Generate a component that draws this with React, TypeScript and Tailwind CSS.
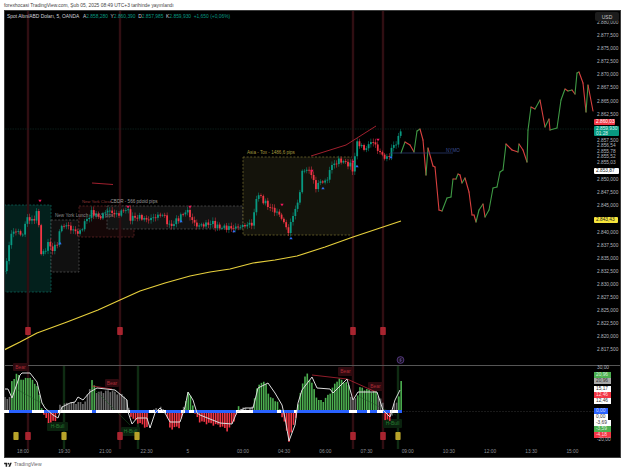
type Pt = [number, number];

const STEP = 2.29;

// close price in page pixels, read off the picture
const closes: Pt[] = [
  [4, 270], [7, 263], [10, 235], [17, 230], [22, 237], [27, 217], [33, 222], [38, 208], [40, 250], [43, 255],
  [48, 243], [52, 250], [58, 243], [60, 227], [67, 225], [72, 230], [80, 233], [83, 225], [92, 212], [100, 218],
  [107, 210], [117, 215], [127, 208], [130, 218], [140, 217], [147, 220], [163, 214], [170, 227], [187, 210],
  [192, 220], [197, 226], [213, 223], [217, 227], [233, 228], [243, 226], [253, 223], [257, 193], [267, 205],
  [280, 215], [289, 233], [292, 217], [298, 203], [303, 168], [312, 173], [315, 190], [318, 183], [328, 180],
  [330, 167], [340, 160], [350, 165], [353, 170], [357, 142], [365, 150], [372, 140], [380, 153], [387, 159],
  [392, 148], [398, 140], [401, 128],
];

const forecast: Pt[] = [
  [401, 153], [405, 142], [410, 145], [414, 152], [417, 131], [420, 129], [423, 140], [426, 175], [428, 148],
  [433, 166], [435, 167], [439, 210], [442, 211], [447, 198], [451, 197], [453, 179], [456, 179], [458, 174],
  [460, 175], [462, 183], [465, 178], [469, 192], [472, 215], [474, 215], [476, 222], [479, 210], [483, 204],
  [485, 217], [489, 210], [493, 188], [497, 187], [500, 172], [503, 170], [506, 144], [512, 150], [518, 152],
  [519, 144], [523, 150], [527, 162], [528, 130], [531, 107], [535, 109], [540, 100], [545, 127], [549, 119],
  [550, 130], [557, 128], [561, 100], [565, 89], [568, 91], [572, 90], [575, 94], [577, 73], [579, 72],
  [583, 83], [586, 112], [588, 85], [593, 111],
];

const maLine: Pt[] = [
  [4, 350], [20, 342], [37, 333], [67, 322], [98, 310], [120, 300], [140, 291], [165, 283], [190, 276], [210, 272],
  [230, 269], [253, 263], [275, 260], [297, 256], [325, 247], [353, 237], [380, 228], [401, 221],
];

const histLevels: Pt[] = [
  [4, 397], [10, 397], [12, 380], [17, 373], [23, 380], [28, 376], [35, 382], [38, 388], [42, 408], [44, 415],
  [50, 423], [57, 418], [59, 405], [70, 402], [85, 402], [92, 380], [95, 387], [97, 392], [110, 390], [125, 395],
  [129, 409], [132, 418], [140, 423], [147, 427], [149, 412], [160, 406], [166, 412], [170, 428], [180, 426],
  [183, 409], [188, 392], [192, 398], [194, 412], [200, 421], [210, 423], [220, 425], [228, 430], [236, 416],
  [238, 406], [245, 408], [252, 408], [256, 390], [262, 380], [266, 384], [270, 397], [277, 400], [280, 410],
  [284, 420], [289, 440], [295, 420], [298, 405], [303, 380], [307, 373], [312, 383], [318, 400], [324, 400],
  [330, 392], [338, 378], [348, 383], [352, 400], [356, 398], [360, 387], [370, 390], [377, 392], [383, 403],
  [385, 418], [390, 421], [393, 410], [395, 400], [398, 405], [400, 381], [401, 381],
];

const histColors: [number, number, string][] = [
  [4, 10, "#6a6a6a"], [10, 43, "#4caf50"], [43, 59, "#f23645"], [59, 91, "#6a6a6a"], [91, 96, "#4caf50"],
  [96, 130, "#6a6a6a"], [130, 149, "#f23645"], [149, 166, "#6a6a6a"], [166, 183, "#f23645"], [183, 185, "#6a6a6a"],
  [185, 193, "#4caf50"], [193, 237, "#f23645"], [237, 240, "#4caf50"], [240, 253, "#6a6a6a"], [253, 280, "#4caf50"],
  [280, 297, "#f23645"], [297, 350, "#4caf50"], [350, 356, "#6a6a6a"], [356, 378, "#4caf50"], [378, 384, "#6a6a6a"],
  [384, 392, "#f23645"], [392, 398, "#6a6a6a"], [398, 403, "#4caf50"],
];

const whiteLine: Pt[] = [
  [5, 389], [8, 389], [12, 398], [20, 375], [22, 373], [30, 373], [37, 382], [42, 403], [45, 408], [53, 415],
  [58, 418], [62, 407], [70, 403], [75, 402], [78, 397], [83, 400], [90, 392], [97, 388], [115, 390], [127, 400],
  [128, 412], [132, 424], [137, 418], [147, 418], [150, 428], [155, 413], [160, 408], [165, 413], [170, 422],
  [180, 422], [185, 407], [188, 392], [193, 400], [197, 413], [200, 415], [220, 423], [232, 424], [237, 412],
  [245, 408], [253, 408], [258, 388], [268, 383], [275, 393], [282, 405], [285, 418], [289, 441], [295, 425],
  [298, 403], [302, 390], [312, 377], [317, 388], [330, 389], [333, 393], [347, 379], [353, 400], [358, 392],
  [377, 392], [383, 410], [390, 417], [395, 400], [400, 390],
];

// zero line of the oscillator, [from, to]
const blueRuns: Pt[] = [
  [9, 32], [44, 58], [92, 96], [130, 149], [155, 158], [166, 181], [185, 189], [194, 236], [253, 277], [281, 294],
  [297, 349], [357, 367], [370, 377], [383, 390], [398, 402],
];

const tints = { up: "#089981", down: "#f23645" };

const pinkMarks: Pt[] = [[40, 201], [128, 207], [190, 207], [282, 205], [312, 171], [353, 162], [378, 140]];
const blueMarks: Pt[] = [[60, 243], [181, 221], [234, 231], [291, 238], [323, 188], [357, 166], [391, 157]];

const redBands = [28, 120, 353, 383];
const greenBands = [64, 138, 398];

const topTicks = ["2.880,000", "2.877,500", "2.875,000", "2.872,500", "2.870,000", "2.867,500", "2.865,000", "2.862,500"];
const lastTicks = ["2.857,500", "2.856,54", "2.855,78", "2.855,52", "2.855,03"];
const midTicks = ["2.850,000", "2.847,500", "2.845,000"];
const lowTicks = [
  "2.840,000", "2.837,500", "2.835,000", "2.832,500", "2.830,000", "2.827,500", "2.825,000", "2.822,500", "2.820,000", "2.817,500",
];

const timeLabels = ["18:00", "19:30", "21:00", "22:30", "5", "03:00", "04:30", "06:00", "07:30", "09:00", "10:30", "12:00", "13:30", "15:00"];

function lerp(pts: Pt[], x: number) {
  for (let i = 1; i < pts.length; i++) {
    if (x <= pts[i][0]) {
      const [x0, y0] = pts[i - 1];
      const [x1, y1] = pts[i];
      return y0 + ((y1 - y0) * (x - x0)) / (x1 - x0 || 1);
    }
  }
  return pts[pts.length - 1][1];
}

const toLine = (pts: Pt[]) => pts.map((p) => p.join(",")).join(" ");

function Candles() {
  const bars = [];
  let prev = 272;
  for (let x = 4.5; x < 401.5; x += STEP) {
    const wobble = Math.sin(x * 1.7) * 1.8 + Math.sin(x * 4.3) * 1.1;
    const close = lerp(closes, x) + wobble;
    const up = close < prev;
    const color = up ? tints.up : tints.down;
    const top = Math.min(prev, close);
    const h = Math.max(Math.abs(close - prev), 0.8);
    const wick = 1.2 + Math.abs(Math.sin(x * 2.9)) * 2.4;
    bars.push(
      <g key={x} fill={color}>
        <rect x={x - 0.25} y={top - wick} width={0.5} height={h + wick * 2} />
        <rect x={x - 0.9} y={top} width={1.8} height={h} />
      </g>,
    );
    prev = close;
  }
  return <g>{bars}</g>;
}

function Forecast() {
  return (
    <g fill="none" strokeWidth={1.1} strokeLinecap="round">
      {forecast.slice(1).map((p, i) => {
        const from = forecast[i];
        return (
          <line
            key={p[0]}
            x1={from[0]}
            y1={from[1]}
            x2={p[0]}
            y2={p[1]}
            stroke={p[1] < from[1] ? "#3f9a45" : "#d8403f"}
          />
        );
      })}
    </g>
  );
}

function Histogram() {
  const bars = [];
  for (let x = 5; x < 402; x += STEP) {
    const range = histColors.find(([a, b]) => x >= a && x < b);
    const level = lerp(histLevels, x) + (Math.round(x / STEP) % 3 === 0 ? 2 : 0);
    const top = Math.min(level, 410);
    const bottom = Math.max(level, 412);
    bars.push(<rect key={x} x={x - 0.8} y={top} width={1.6} height={bottom - top} fill={range ? range[2] : "#6a6a6a"} />);
  }
  return <g>{bars}</g>;
}

function Tag({ x, y, w, h, text, kind }: { x: number; y: number; w: number; h: number; text: string; kind: "bear" | "bull" }) {
  return (
    <g>
      <rect x={x} y={y} width={w} height={h} rx={1} fill={kind === "bear" ? "#2e0a0f" : "#0a220e"} />
      <text
        x={x + w / 2}
        y={y + h / 2 + 1.7}
        textAnchor="middle"
        fontSize={5}
        fill={kind === "bear" ? "#a82a35" : "#277a31"}
      >
        {text}
      </text>
    </g>
  );
}

function PricePane() {
  return (
    <div className="flex h-[354px]">
      <svg viewBox="5 11 590 354" className="h-[354px] w-[590px] shrink-0">
        {/* session boxes */}
        <g strokeWidth={0.7} strokeDasharray="2 1.6">
          <rect x={4} y={205} width={47} height={87} fill="#03201c" stroke="#0f6f62" />
          <rect x={51} y={220} width={28} height={52} fill="#101010" stroke="#5a5a5a" />
          <rect x={79} y={206} width={55} height={31} fill="#140707" stroke="#6e2a2a" />
          <rect x={107} y={206} width={136} height={23} fill="#131313" stroke="#5a5a5a" />
          <rect x={243} y={157} width={110} height={78} fill="#14130b" stroke="#7d7431" />
        </g>
        {redBands.map((x) => (
          <rect key={x} x={x - 1.2} y={11} width={2.4} height={354} fill="#300e12" />
        ))}
        <line x1={5} y1={129} x2={595} y2={129} stroke="#10302a" strokeWidth={0.6} strokeDasharray="1.5 1" />
        <text x={55} y={217} fontSize={4.6} fill="#8a8a8a">New York Lunch - 768,5 pips</text>
        <text x={82} y={203} fontSize={4.2} fill="#8f3535">New York Close</text>
        <text x={110.5} y={203} fontSize={4.6} fill="#9a9a9a">CBDR - 566 pdoid pips</text>
        <text x={247} y={153.5} fontSize={4.6} fill="#a3993f">Asia - Tox - 1486,6 pips</text>

        <polyline points={toLine(maLine)} fill="none" stroke="#e6cf3c" strokeWidth={1.2} strokeLinejoin="round" />
        <Candles />
        <Forecast />

        <line x1={92} y1={183} x2={113} y2={184.5} stroke="#c9283a" strokeWidth={0.8} />
        <polyline points="311,156 346,145 376,126" fill="none" stroke="#c9283a" strokeWidth={0.8} />
        <line x1={390} y1={153} x2={453} y2={153} stroke="#2f3f78" strokeWidth={0.7} />
        <text x={446} y={152} fontSize={4.6} fill="#3d4f96">NYMO</text>

        {pinkMarks.map(([x, y]) => (
          <polygon key={x} points={`${x - 1.7},${y - 1.3} ${x + 1.7},${y - 1.3} ${x},${y + 1.3}`} fill="#f0185c" />
        ))}
        {blueMarks.map(([x, y]) => (
          <polygon key={x} points={`${x - 1.7},${y + 1.3} ${x + 1.7},${y + 1.3} ${x},${y - 1.3}`} fill="#2f6df0" />
        ))}
        {redBands.map((x) => (
          <rect key={x} x={x - 2.8} y={327} width={5.6} height={8} rx={0.8} fill="#a8242f" />
        ))}

        {/* badge above the last bar */}
        <circle cx={400.5} cy={360} r={3.4} fill="#15101c" stroke="#6f47a8" strokeWidth={0.7} />
        <path d="M401.2 358 L399.7 360.2 H401.3 L399.9 362" fill="none" stroke="#8e63cc" strokeWidth={0.5} />
      </svg>

      <div className="relative flex w-[25px] flex-col pl-[2px] pt-[9px] text-[4.8px] leading-[6px] text-[#b2b5be]">
        <div className="flex flex-col gap-[7.1px]">
          {topTicks.map((t) => (
            <span key={t} className="h-[6px]">{t}</span>
          ))}
        </div>
        <span className="-ml-[3px] mt-[1.8px] h-[6px] w-[21px] rounded-[1px] bg-[#f23645] pl-[2px] text-white">2.860,03</span>
        <span className="-ml-[3px] mt-[0.5px] h-[10px] w-[25px] rounded-[1px] bg-[#089981] pl-[2px] leading-[5px] text-[#d6f5ef]">
          2.859,930
          <br />
          01:28
        </span>
        <div className="mt-[2px] flex flex-col">
          {lastTicks.map((t) => (
            <span key={t} className="-mb-[0.5px] h-[6px]">{t}</span>
          ))}
        </div>
        <span className="-ml-[3px] mt-[2.5px] h-[6px] w-[25px] rounded-[1px] bg-white pl-[2px] text-[#222]">2.853,87</span>
        <div className="mt-[3px] flex flex-col gap-[7.1px]">
          {midTicks.map((t) => (
            <span key={t} className="h-[6px]">{t}</span>
          ))}
        </div>
        <span className="-ml-[3px] mt-[8.3px] h-[6px] w-[24px] rounded-[1px] bg-[#f7e53b] pl-[2px] text-[#222]">2.843,43</span>
        <div className="mt-[6.2px] flex flex-col gap-[7.1px]">
          {lowTicks.map((t) => (
            <span key={t} className="h-[6px]">{t}</span>
          ))}
        </div>
        {/* currency button floats over the axis */}
        <div className="absolute left-0 top-[1px] flex h-[9px] w-[24px] items-center justify-center rounded-[2px] bg-[#1c1c1c] text-[5px] text-[#c8c8c8]">
          USD
        </div>
      </div>
    </div>
  );
}

function OscillatorPane() {
  return (
    <div className="flex h-[83px] border-t border-[#555]">
      <svg viewBox="5 366 590 83" className="h-[83px] w-[590px] shrink-0 overflow-visible">
        {redBands.map((x) => (
          <rect key={x} x={x - 1.2} y={366} width={2.4} height={83} fill="#300e12" />
        ))}
        {greenBands.map((x) => (
          <rect key={x} x={x - 1.2} y={366} width={2.4} height={83} fill="#0f2c13" />
        ))}
        <line x1={403} y1={411.5} x2={595} y2={411.5} stroke="#2a2a2a" strokeWidth={0.6} strokeDasharray="2 1" />

        <Tag x={13} y={363} w={15} h={8} text="Bear" kind="bear" />
        <Tag x={105} y={379} w={14} h={8} text="Bear" kind="bear" />
        <Tag x={338} y={367} w={15} h={9} text="Bear" kind="bear" />
        <Tag x={368} y={382} w={15} h={9} text="Bear" kind="bear" />
        <Tag x={47} y={422} w={21} h={9} text="H-Bull" kind="bull" />
        <Tag x={121} y={427} w={19} h={9} text="H-Bull" kind="bull" />
        <Tag x={383} y={419} w={19} h={9} text="H-Bull" kind="bull" />

        <Histogram />

        {/* divergence lines */}
        <line x1={18} y1={390} x2={45} y2={405} stroke="#1d5a23" strokeWidth={0.5} />
        <line x1={95} y1={390} x2={130} y2={425} stroke="#1d5a23" strokeWidth={0.5} />
        <line x1={356} y1={395} x2={396} y2={415} stroke="#1d5a23" strokeWidth={0.5} />
        <line x1={92} y1={386} x2={112} y2={389} stroke="#d02a3c" strokeWidth={0.7} />
        <polyline points="312,375 347,379 376,392" fill="none" stroke="#d02a3c" strokeWidth={0.7} />

        <rect x={4} y={410} width={398} height={3} fill="#ffffff" />
        {blueRuns.map(([a, b]) => (
          <rect key={a} x={a} y={410} width={b - a} height={3} fill="#2962ff" />
        ))}
        <polyline points={toLine(whiteLine)} fill="none" stroke="#dcdcdc" strokeWidth={1} strokeLinejoin="round" />

        {[16, 64, 137, 398].map((x) => (
          <rect key={x} x={x - 2.6} y={432} width={5.2} height={8} rx={0.8} fill="#b8a32a" />
        ))}
        {redBands.map((x) => (
          <rect key={x} x={x - 2.8} y={432} width={5.6} height={8} rx={0.8} fill="#a8242f" />
        ))}
      </svg>

      <div className="flex w-[25px] flex-col pl-[2px] text-[4.8px] leading-[6px] text-[#b2b5be]">
        <span className="-mt-[1px] h-[6px]">30,00</span>
        <span className="-ml-[3px] mt-[1px] h-[6px] w-[17px] bg-[#4caf50] pl-[2px] text-[#d7f0d9]">20,96</span>
        <span className="-ml-[3px] h-[6px] w-[17px] bg-[#a8a8a8] pl-[2px] text-[#333]">20,96</span>
        <span className="-ml-[3px] mt-[2px] h-[6px] w-[17px] bg-white pl-[2px] text-[#333]">15,17</span>
        <span className="-ml-[3px] h-[6px] w-[17px] bg-[#f23645] pl-[2px] text-[#ffd9dd]">12,46</span>
        <span className="-ml-[3px] h-[6px] w-[17px] bg-white pl-[2px] text-[#333]">12,46</span>
        <span className="-ml-[3px] mt-[4px] h-[6px] w-[14px] bg-[#2962ff] pl-[2px] text-[#cfdcff]">0,00</span>
        <span className="-ml-[3px] h-[6px] w-[14px] bg-white pl-[2px] text-[#333]">0,00</span>
        <span className="-ml-[3px] h-[6px] w-[17px] bg-white pl-[2px] text-[#333]">-3,69</span>
        <span className="-ml-[3px] h-[6px] w-[17px] bg-[#4caf50] pl-[2px] text-[#d7f0d9]">-3,59</span>
        <span className="-ml-[3px] h-[6px] w-[17px] bg-[#f23645] pl-[2px] text-[#ffd9dd]">-4,18</span>
        <span className="-mt-[1px] h-[6px]">-20,00</span>
      </div>
    </div>
  );
}

function TimeAxis() {
  return (
    <div className="-ml-[2.6px] flex h-[8px] pt-[1px] text-[4.8px] leading-[6px] text-[#8f9198]">
      {timeLabels.map((t) => (
        <span key={t} className={t === "5" ? "mr-[14px] w-[41.2px] text-center" : "w-[41.2px] text-center"}>
          {t}
        </span>
      ))}
    </div>
  );
}

export default function App() {
  return (
    <div className="flex h-[472px] w-[625px] flex-col bg-white font-['Liberation_Sans',Arial,sans-serif]">
      <div className="h-[10px] pl-[4px] pt-[3px] text-[4.9px] leading-[5px] text-[#444]">
        forexhocasi TradingView.com, Şub 05, 2025 08:49 UTC+3 tarihinde yayınlandı
      </div>

      <div className="relative ml-[4px] h-[448px] w-[617px] border border-[#3b3b3b] bg-black">
        {/* legend sits on top of the chart */}
        <div className="absolute left-[2px] top-[3px] z-10 flex gap-[2.6px] text-[4.9px] leading-[5px] text-[#d1d4dc]">
          <span className="mr-[1px]">Spot Altın/ABD Doları, 5, OANDA</span>
          <span>A<span className="text-[#089981]">2.858,280</span></span>
          <span>Y<span className="text-[#089981]">2.860,390</span></span>
          <span>D<span className="text-[#089981]">2.857,985</span></span>
          <span>K<span className="text-[#089981]">2.859,930</span></span>
          <span className="text-[#089981]">+1,650 (+0,06%)</span>
        </div>
        <PricePane />
        <OscillatorPane />
        <TimeAxis />
      </div>

      <div className="flex flex-1 items-center gap-[2px] pl-[4px]">
        <svg viewBox="0 0 36 28" className="h-[6px] w-[8px]" fill="#222">
          <path d="M14 22H7V11H0V4h14v18zM28 22h-8l7.5-18h8L28 22z" />
          <circle cx={20} cy={8} r={4} />
        </svg>
        <span className="text-[5px] text-[#666]">TradingView</span>
      </div>
    </div>
  );
}
